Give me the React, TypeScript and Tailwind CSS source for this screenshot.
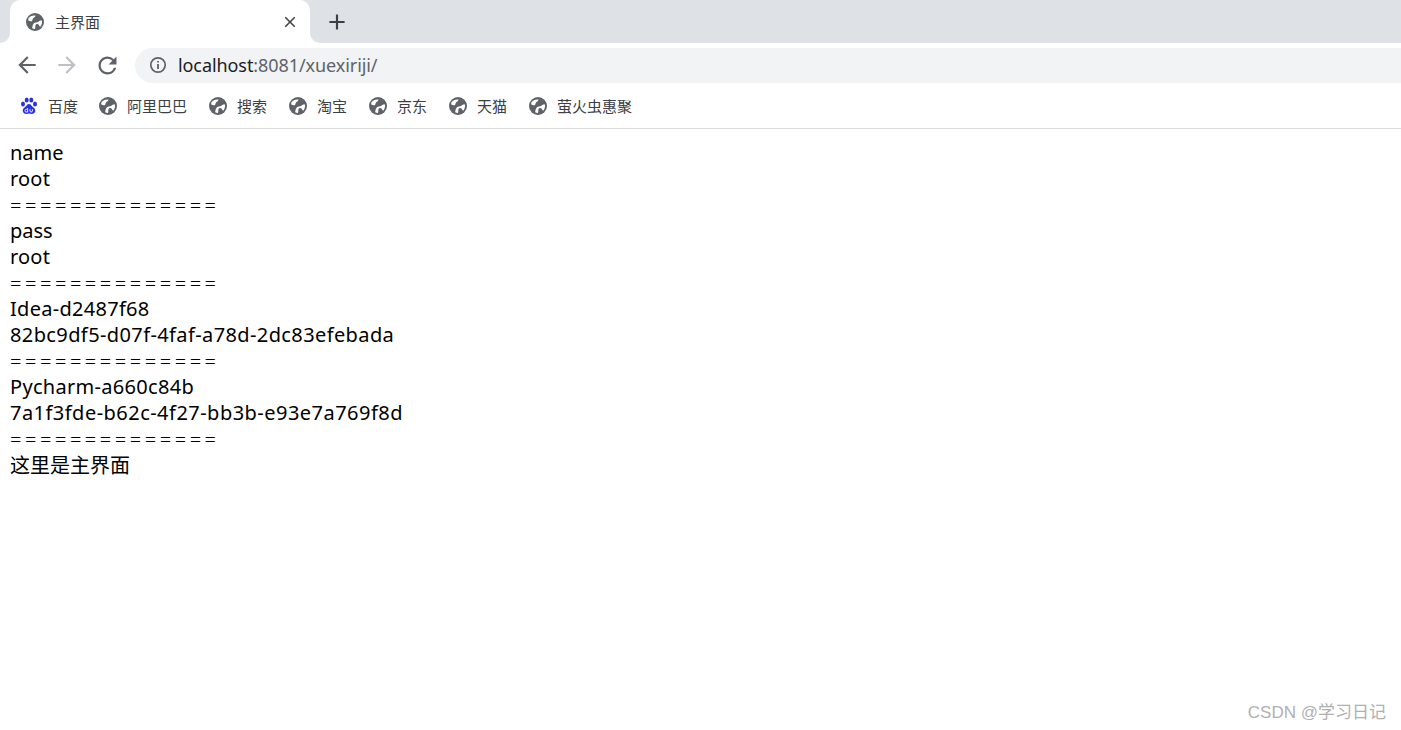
import type { ReactNode } from "react";

const bookmarks = ["阿里巴巴", "搜索", "淘宝", "京东", "天猫", "萤火虫惠聚"];

const SEP = "==============";
const SEP_CLS = "relative top-px font-light tracking-[3.55px]";

const lines = [
  { text: "name", cls: "" },
  { text: "root", cls: "tracking-[0.2px]" },
  { text: SEP, cls: SEP_CLS },
  { text: "pass", cls: "" },
  { text: "root", cls: "tracking-[0.2px]" },
  { text: SEP, cls: SEP_CLS },
  { text: "Idea-d2487f68", cls: "tracking-[0.28px]" },
  { text: "82bc9df5-d07f-4faf-a78d-2dc83efebada", cls: "tracking-[0.39px]" },
  { text: SEP, cls: SEP_CLS },
  { text: "Pycharm-a660c84b", cls: "tracking-[0.3px]" },
  { text: "7a1f3fde-b62c-4f27-bb3b-e93e7a769f8d", cls: "tracking-[0.47px]" },
  { text: SEP, cls: SEP_CLS },
  { text: "这里是主界面", cls: "relative top-px" },
];

const Globe = () => (
  <svg width="18" height="18" viewBox="0 0 18 18" className="shrink-0">
    <circle cx="9" cy="9" r="9" fill="#5f6368" />
    <path d="M2.6 5C4.5 3 7 2.2 9.5 2.6C9.3 4 8 4.6 7 5.6C6.2 6.5 6.8 7.6 5.8 8.2C4.8 8.6 3.4 7.8 2.2 7.2C2.2 6.4 2.3 5.7 2.6 5Z" fill="#fff" />
    <path d="M16 7.6C16.3 10 15.6 12.4 14.2 13.8C13.2 13 13.2 11.7 12 11.2C10.6 10.8 9.8 11.3 9.4 12.6C9.1 13.8 9.5 15 9 16C8 16 7 15.7 6.2 15.2C6.4 13.6 6.5 12 7.7 10.5C9 9 11 9.8 12.4 8.7C13.4 7.9 14.6 7.2 16 7.6Z" fill="#fff" />
  </svg>
);

const BaiduIcon = () => (
  <svg width="18" height="18" viewBox="0 0 18 18" className="shrink-0" fill="#2932e1">
    <ellipse cx="3" cy="7" rx="2" ry="2.5" />
    <ellipse cx="6.7" cy="3" rx="2" ry="2.6" />
    <ellipse cx="11.3" cy="3" rx="2" ry="2.6" />
    <ellipse cx="15" cy="7" rx="2" ry="2.5" />
    <path d="M9 7C11 7 11.5 9 13.2 10.2C15 11.5 15.8 13 15 15C14.2 17 12 17.2 9 16.6C6 17.2 3.8 17 3 15C2.2 13 3 11.5 4.8 10.2C6.5 9 7 7 9 7Z" />
    <path d="M7.6 11V15H6C5.3 15 5 14.4 5 13.6C5 12.8 5.4 12.3 6.8 12.3M10 12.2V14C10 14.7 10.4 15 11 15C11.6 15 12.4 14.8 12.4 14V12.2" fill="none" stroke="#fff" strokeWidth="0.9" />
  </svg>
);

const Icon = ({ d, size, color }: { d: string; size: number; color: string }) => (
  <svg width={size} height={size} viewBox="0 0 24 24" fill={color} className="shrink-0">
    <path d={d} />
  </svg>
);

const Bookmark = ({ icon, label }: { icon: ReactNode; label: string }) => (
  <div className="flex items-center gap-[10px]">
    {icon}
    <span className="text-[15px] leading-[20px] text-[#3c4043]">{label}</span>
  </div>
);

const NavButton = ({ children }: { children: ReactNode }) => (
  <div className="flex w-10 items-center justify-center">{children}</div>
);

export default function App() {
  return (
    <div
      className="relative flex h-[730px] flex-col overflow-hidden bg-white"
      style={{ fontFamily: '"Noto Sans", "Noto Sans CJK SC", sans-serif' }}
    >
      {/* 标签栏 */}
      <div className="flex h-[43px]">
        <div className="w-[10px] rounded-br-[10px] bg-[#dee1e6]" />
        <div className="w-[300px] bg-[#dee1e6]">
          <div className="flex h-[43px] items-center rounded-t-[10px] bg-white pl-4 pr-[11px]">
            <Globe />
            <span className="ml-[11px] flex-1 text-[15px] leading-5 text-[#3c4043]">主界面</span>
            <Icon
              size={18}
              color="#3c4043"
              d="M19 6.41 17.59 5 12 10.59 6.41 5 5 6.41 10.59 12 5 17.59 6.41 19 12 13.41 17.59 19 19 17.59 13.41 12z"
            />
          </div>
        </div>
        <div className="flex flex-1 items-center rounded-bl-[10px] bg-[#dee1e6] pl-[14px]">
          <Icon size={26} color="#3c4043" d="M19 13h-6v6h-2v-6H5v-2h6V5h2v6h6v2z" />
        </div>
      </div>

      {/* 地址栏 */}
      <div className="flex h-[43px] items-center bg-white pl-[7px] pt-px">
        <NavButton>
          <Icon size={26} color="#5f6368" d="M20 11H7.83l5.59-5.59L12 4l-8 8 8 8 1.41-1.41L7.83 13H20v-2z" />
        </NavButton>
        <NavButton>
          <Icon size={26} color="#bdc1c6" d="M4 11h12.17l-5.59-5.59L12 4l8 8-8 8-1.41-1.41L16.17 13H4v-2z" />
        </NavButton>
        <NavButton>
          <Icon
            size={27}
            color="#5f6368"
            d="M17.65 6.35A7.958 7.958 0 0 0 12 4c-4.42 0-7.99 3.58-7.99 8s3.57 8 7.99 8c3.73 0 6.84-2.55 7.73-6h-2.08A5.99 5.99 0 0 1 12 18c-3.31 0-6-2.69-6-6s2.69-6 6-6c1.66 0 3.14.69 4.22 1.78L13 11h7V4l-2.35 2.35z"
          />
        </NavButton>
        <div className="ml-2 flex h-[35px] flex-1 items-center rounded-l-full bg-[#f1f3f4] pl-[14px]">
          <svg width="18" height="18" viewBox="0 0 18 18" className="shrink-0">
            <circle cx="9" cy="9" r="7.2" fill="none" stroke="#5f6368" strokeWidth="1.7" />
            <path d="M9 8V13M9 5V6.6" stroke="#5f6368" strokeWidth="1.8" />
          </svg>
          <span className="ml-[11px] text-[18px] leading-6 tracking-[-0.08px] text-[#202124]">
            localhost<span className="text-[#5f6368]">:8081/xuexiriji/</span>
          </span>
        </div>
      </div>

      {/* 书签栏 */}
      <div className="flex h-[43px] items-center gap-[22px] border-b border-[#dadce0] pb-[3px] pl-5">
        <div className="-mr-px">
          <Bookmark icon={<BaiduIcon />} label="百度" />
        </div>
        {bookmarks.map((b) => (
          <Bookmark key={b} icon={<Globe />} label={b} />
        ))}
      </div>

      {/* 页面内容 */}
      <div className="pl-[10px] pt-[11px] text-[20px] leading-[26px] text-black">
        {lines.map((line, i) => (
          <div key={i} className={line.cls}>
            {line.text}
          </div>
        ))}
      </div>

      <div
        className="absolute bottom-[5px] right-[15px] text-[17px] leading-6 text-[#b0b0b0]"
        style={{ fontFamily: '"Liberation Sans", "Noto Sans CJK SC", sans-serif' }}
      >
        CSDN @学习日记
      </div>
    </div>
  );
}
